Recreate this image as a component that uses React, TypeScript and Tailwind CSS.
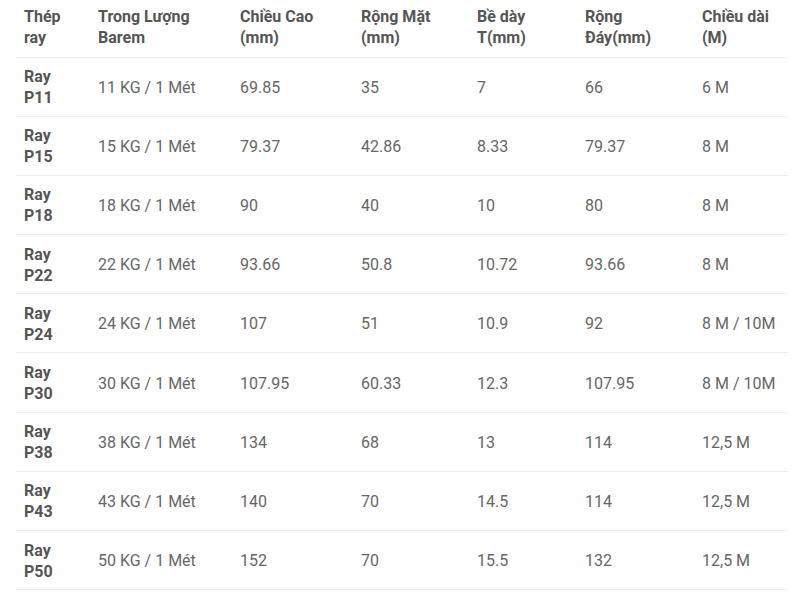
const headers = [
  ['Thép', 'ray'],
  ['Trong Lượng', 'Barem'],
  ['Chiều Cao', '(mm)'],
  ['Rộng Mặt', '(mm)'],
  ['Bề dày', 'T(mm)'],
  ['Rộng', 'Đáy(mm)'],
  ['Chiều dài', '(M)'],
];

const colWidths = ['w-[74px]', 'w-[142px]', 'w-[121px]', 'w-[116px]', 'w-[108px]', 'w-[117px]', 'w-[94px]'];

const rows = [
  ['P11', '11 KG / 1 Mét', '69.85', '35', '7', '66', '6 M'],
  ['P15', '15 KG / 1 Mét', '79.37', '42.86', '8.33', '79.37', '8 M'],
  ['P18', '18 KG / 1 Mét', '90', '40', '10', '80', '8 M'],
  ['P22', '22 KG / 1 Mét', '93.66', '50.8', '10.72', '93.66', '8 M'],
  ['P24', '24 KG / 1 Mét', '107', '51', '10.9', '92', '8 M / 10M'],
  ['P30', '30 KG / 1 Mét', '107.95', '60.33', '12.3', '107.95', '8 M / 10M'],
  ['P38', '38 KG / 1 Mét', '134', '68', '13', '114', '12,5 M'],
  ['P43', '43 KG / 1 Mét', '140', '70', '14.5', '114', '12,5 M'],
  ['P50', '50 KG / 1 Mét', '152', '70', '15.5', '132', '12,5 M'],
];

export default function App() {
  return (
    <div className="w-[800px] h-[592px] bg-white px-4 overflow-hidden font-['Roboto',sans-serif] text-[16px] leading-[21px]">
      <table className="w-[772px] border-collapse table-fixed">
        <thead>
          <tr className="h-[57px] border-b border-[#ececec]">
            {headers.map((h, i) => (
              <th key={i} className={`${colWidths[i]} px-2 pb-[2px] text-left align-middle font-bold text-[#555]`}>
                {h[0]}
                <br />
                {h[1]}
              </th>
            ))}
          </tr>
        </thead>
        <tbody>
          {rows.map((r) => (
            <tr key={r[0]} className="h-[59.2px] border-b border-[#ececec]">
              <td className="px-2 pt-[1px] align-middle font-bold text-[#555]">
                Ray
                <br />
                {r[0]}
              </td>
              {r.slice(1).map((c, i) => (
                <td key={i} className="px-2 pt-[1px] align-middle text-[#666]">
                  {c}
                </td>
              ))}
            </tr>
          ))}
        </tbody>
      </table>
    </div>
  );
}
